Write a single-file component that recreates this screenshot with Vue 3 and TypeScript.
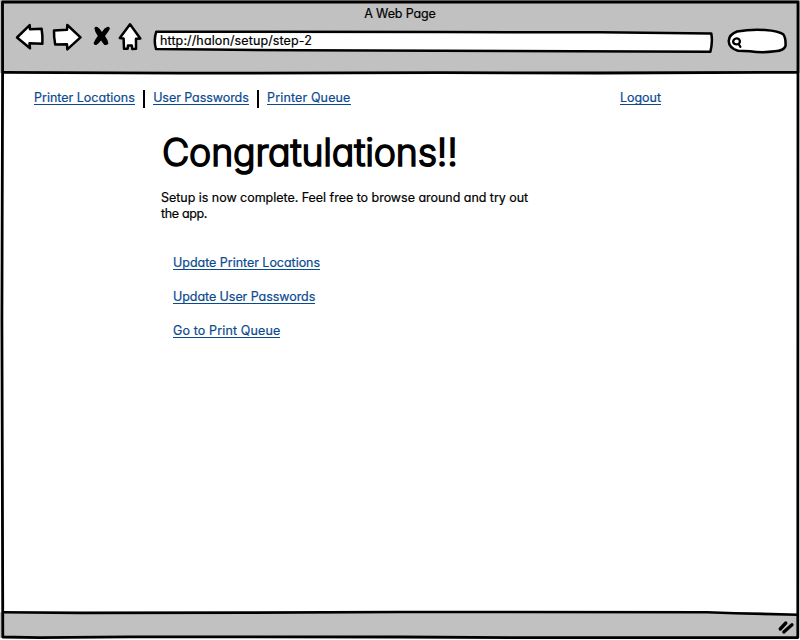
<script setup lang="ts">
interface NavLink {
  label: string
  key: string
}

const pageTitle = 'A Web Page'
const address = 'http://halon/setup/step-2'

const navLinks: NavLink[] = [
  { label: 'Printer Locations', key: 'locations' },
  { label: 'User Passwords', key: 'passwords' },
  { label: 'Printer Queue', key: 'queue' },
]

const actions: NavLink[] = [
  { label: 'Update Printer Locations', key: 'update-locations' },
  { label: 'Update User Passwords', key: 'update-passwords' },
  { label: 'Go to Print Queue', key: 'print-queue' },
]
</script>

<template>
  <div class="browser">
    <header class="chrome">
      <div class="window-title">{{ pageTitle }}</div>
      <div class="toolbar">
        <svg class="tools" width="132" height="36" viewBox="12 20 132 36">
          <g fill="#fff" stroke="#000" stroke-width="2.5" stroke-linejoin="round" stroke-linecap="round">
            <path d="M17 37.5L29.7 25.2L30 29.3L41.6 28.8Q42.8 36 42.4 43.8L29.5 43.3L30 48.3Z" />
            <path d="M54 30.4L67 29.8L67.3 25L80.5 37.3L67.3 49.3L67 44.2L55.2 44.4Q53.8 37 54 30.4Z" />
            <path d="M130 24.3L119.8 38L123.6 38.6L124 48.8L127.6 48.8L128 45.4L131.8 45.4L132.3 49L136 48.7L136 38.7L140.3 38.5Z" />
          </g>
          <path d="M94.4 28.2Q95 26.3 97.4 27Q100 28.6 101.9 32Q104.4 27.8 107.6 26.8Q110 26.6 109.8 29Q108 32.4 105 36Q108 40 108.4 43.4Q107 45.6 104.4 44.9Q102.6 43 101 40.6Q98.8 43.8 96.4 45Q93.5 45.4 93.6 42.9Q95 39.4 97.8 36Q94.8 32 94.4 28.2Z" />
        </svg>
        <div class="address">
          <svg class="shape" width="562" height="26" viewBox="152 28 562 26">
            <path d="M156.3 31.7L440 32L600 32.3L711.3 33.5Q712.8 42 710.4 51.7L440 50.8L300 50.3L210 49.5L156 49Q153.4 40 156.3 31.7Z" fill="#fff" stroke="#000" stroke-width="2.5" stroke-linejoin="round" />
          </svg>
          <span class="url">{{ address }}</span>
        </div>
        <svg class="search" width="64" height="28" viewBox="726 27 64 28">
          <path d="M737 31.5Q751 29 765 30Q779 31 783.2 34.3Q786 38 785.5 46Q784 50.5 775 51.3Q762 53 750 51.2L738 50.8Q729 48 728.7 41Q729 34.5 737 31.5Z" fill="#fff" stroke="#000" stroke-width="2.5" />
          <path d="M739.2 39.4Q736.5 37.2 733.9 39.6Q732.2 42 734.3 43.8Q736.6 45.2 739 43.6Q740.8 41.6 739.2 39.4M738.6 44L740.4 46.8" fill="none" stroke="#000" stroke-width="2.2" stroke-linecap="round" />
        </svg>
      </div>
    </header>

    <nav class="nav">
      <template v-for="(link, i) in navLinks" :key="link.key">
        <span v-if="i > 0" class="divider"></span>
        <a class="link" :class="link.key">{{ link.label }}</a>
      </template>
      <a class="link logout">Logout</a>
    </nav>

    <main class="content">
      <h1 class="heading">Congratulations!!</h1>
      <p class="message">Setup is now complete. Feel free to browse around and try out<br /><span class="tail">the app.</span></p>
      <ul class="actions">
        <li v-for="action in actions" :key="action.key">
          <a class="link" :class="action.key">{{ action.label }}</a>
        </li>
      </ul>
    </main>

    <footer class="status"></footer>

    <svg class="frame" width="800" height="640" viewBox="0 0 800 640">
      <path d="M0 612.3L400 612L707 612.2L798 614.6V638H0Z" fill="#c1c1c1" />
      <path d="M2.5 2L798 2L797.8 637.6L540 637.7L400 637L130 636.8L40 637.6L2.8 637L1.9 320L2.6 70Z" fill="none" stroke="#000" stroke-width="2.8" stroke-linejoin="round" />
      <path d="M2.5 72.3L180 73.2L440 72.7L600 73L798 72.3" fill="none" stroke="#000" stroke-width="2.8" />
      <path d="M2.5 612.3L80 612.9L250 612.6L400 612L707 612.2L735 613.2L798 614.7" fill="none" stroke="#000" stroke-width="2.6" />
      <path d="M780.2 629L785.8 623M783.8 632L792 624.8" fill="none" stroke="#000" stroke-width="3.3" stroke-linecap="round" />
    </svg>
  </div>
</template>

<style>
body {
  margin: 0;
  background: #fff;
}
</style>

<style scoped>
.browser {
  position: relative;
  display: flex;
  flex-direction: column;
  width: 800px;
  height: 640px;
  overflow: hidden;
  background: #fff;
  color: #000;
  font-family: Inter, 'Open Sans', sans-serif;
  font-feature-settings: 'cv11' 1, 'ss03' 1;
  font-size: 12.5px;
  letter-spacing: -0.03px;
  line-height: 16px;
  white-space: nowrap;
  -webkit-text-stroke: 0.2px currentColor;
}
.chrome {
  height: 73px;
  flex: none;
  background: #c1c1c1;
}
.window-title {
  padding-top: 6px;
  height: 14px;
  letter-spacing: -0.12px;
  text-align: center;
}
.toolbar {
  display: flex;
  align-items: flex-start;
  padding-left: 12px;
}
.tools,
.search {
  display: block;
  flex: none;
}
.address {
  position: relative;
  flex: none;
  width: 562px;
  height: 26px;
  margin: 8px 12px 0 8px;
}
.shape {
  position: absolute;
  inset: 0;
}
.url {
  position: relative;
  display: block;
  padding: 5px 0 0 8px;
  letter-spacing: 0.12px;
}
.search {
  margin-top: 7px;
}
.nav {
  display: flex;
  align-items: flex-start;
  height: 20px;
  padding: 16px 139px 0 34px;
}
.link {
  display: inline-block;
  height: 15px;
  border-bottom: 1px solid #0b4a8f;
  color: #0b4a8f;
  line-height: 17px;
}
.locations {
  letter-spacing: 0;
}
.passwords,
.update-passwords {
  letter-spacing: -0.06px;
}
.queue,
.print-queue {
  letter-spacing: 0.13px;
}
.divider {
  width: 2px;
  height: 18px;
  margin: 1px 8px 0 8.4px;
  background: #000;
}
.logout {
  margin-left: auto;
}
.content {
  flex: 1;
  padding: 24px 0 0 161px;
}
.heading {
  margin: 0 0 0 1px;
  font-size: 37.5px;
  font-weight: 300;
  letter-spacing: -0.2px;
  line-height: 40px;
  stroke-linejoin: round;
  -webkit-text-stroke: 1.6px #000;
}
.message {
  margin: 17px 0 0;
}
.tail {
  letter-spacing: -0.35px;
}
.actions {
  margin: 32px 0 0;
  padding: 0 0 0 12px;
  list-style: none;
}
.actions li {
  height: 34px;
}
.status {
  height: 27px;
}
.frame {
  position: absolute;
  inset: 0;
  pointer-events: none;
}
</style>
